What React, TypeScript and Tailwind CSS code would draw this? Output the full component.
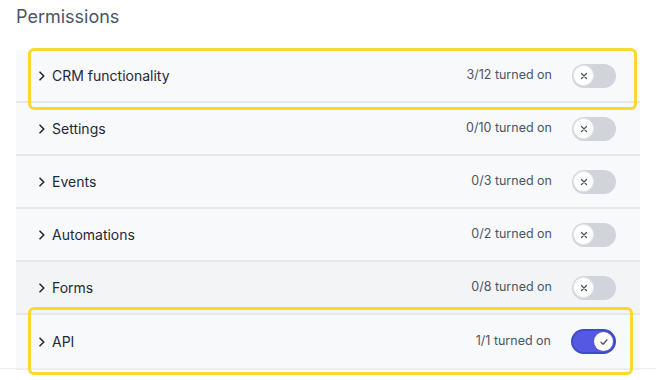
import React from 'react';

type Row = {
  label: string;
  on: number;
  total: number;
  shade?: boolean;
};

const rows: Row[] = [
  { label: 'CRM functionality', on: 3, total: 12 },
  { label: 'Settings', on: 0, total: 10 },
  { label: 'Events', on: 0, total: 3 },
  { label: 'Automations', on: 0, total: 2 },
  { label: 'Forms', on: 0, total: 8, shade: true },
  { label: 'API', on: 1, total: 1 },
];

function Chevron() {
  return (
    <svg width="8" height="10" viewBox="0 0 8 10" fill="none" className="shrink-0">
      <path d="M2 1.2 L5.8 5 L2 8.8" stroke="#1f2937" strokeWidth="1.6" strokeLinecap="round" strokeLinejoin="round" />
    </svg>
  );
}

function Toggle({ checked }: { checked: boolean }) {
  if (checked) {
    return (
      <div className="w-[45px] h-[25px] rounded-full bg-[#5558e3] border-2 border-[#3e4cc7] flex items-center justify-end pr-[1px]">
        <div className="w-[19px] h-[19px] rounded-full bg-white flex items-center justify-center">
          <svg width="10" height="10" viewBox="0 0 10 10" fill="none">
            <path d="M2 5.3 L4.1 7.3 L8 2.8" stroke="#4b5563" strokeWidth="1.3" strokeLinecap="round" strokeLinejoin="round" />
          </svg>
        </div>
      </div>
    );
  }
  return (
    <div className="w-[44px] h-[24px] rounded-full bg-[#d1d5db] flex items-center pl-[1px]">
      <div className="w-[21px] h-[21px] rounded-full bg-white border border-[#e5e7eb] flex items-center justify-center">
        <svg width="8" height="8" viewBox="0 0 8 8" fill="none">
          <path d="M1.5 1.5 L6.5 6.5 M6.5 1.5 L1.5 6.5" stroke="#4b5563" strokeWidth="1.3" strokeLinecap="round" />
        </svg>
      </div>
    </div>
  );
}

export default function App() {
  return (
    <div
      className="relative w-[656px] h-[380px] bg-white overflow-hidden"
      style={{ fontFamily: 'Inter, "Noto Sans", sans-serif' }}
    >
      <h1 className="pl-4 pt-[3px] text-[18px] leading-[28px] text-[#4b5563] font-normal mb-[19px]">
        Permissions
      </h1>

      <div className="mx-4 border-b-2 border-[#eceef1] pb-0">
        {rows.map((row, i) => (
          <div
            key={row.label}
            className={
              'flex items-center h-[53px] pl-[22px] pr-6 ' +
              (i < rows.length - 1 ? 'border-b-2 border-[#e5e7eb] ' : '') +
              (row.shade ? 'bg-[#f3f4f6]' : 'bg-[#f8f9fb]')
            }
          >
            <Chevron />
            <span className="ml-[6px] text-[14px] text-[#1f2937]">{row.label}</span>
            <span className="ml-auto text-[12.5px] text-[#4b5563]">
              {row.on}/{row.total} turned on
            </span>
            <div className="ml-5">
              <Toggle checked={row.on === row.total && row.total > 0 && row.label === 'API'} />
            </div>
          </div>
        ))}
      </div>
      <div className="absolute left-0 right-0 top-[368px] h-[1px] bg-[#eceef1]" />

      {/* highlight boxes */}
      <div className="absolute left-[28px] top-[48px] w-[609px] h-[62px] rounded-[6px] border-[3.5px] border-[#fcd82e]" />
      <div className="absolute left-[28px] top-[307px] w-[605px] h-[68px] rounded-[6px] border-[3.5px] border-[#fcd82e]" />
    </div>
  );
}
